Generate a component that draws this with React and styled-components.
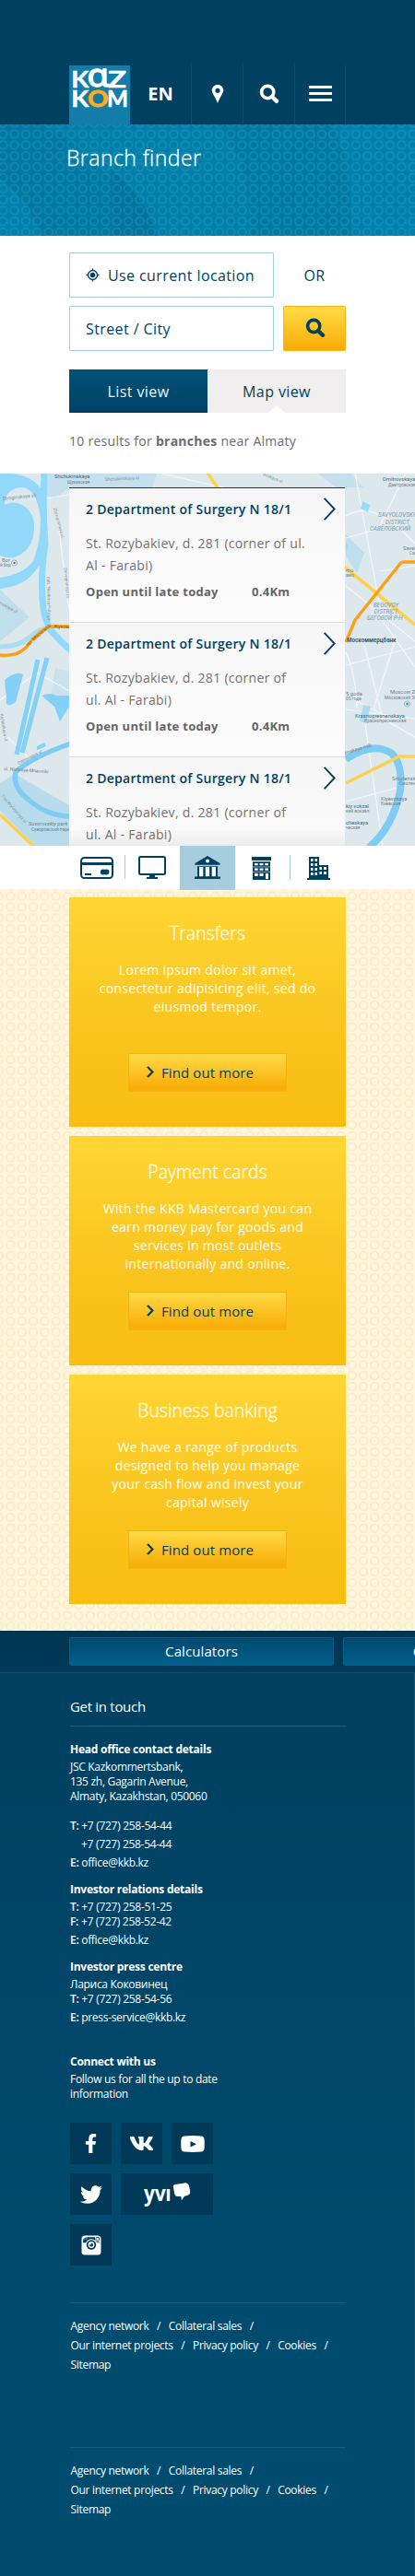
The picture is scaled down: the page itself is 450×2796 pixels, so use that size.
import React from "react";
import styled, { createGlobalStyle, css } from "styled-components";
import { FaFacebookF, FaTwitter, FaVk } from "react-icons/fa";

const navy = "#004060";
const deep = "#003a58";

const GlobalStyle = createGlobalStyle`
  * { box-sizing: border-box; }
  body { margin: 0; font-family: "Open Sans", "Noto Sans", sans-serif; background: #fff; color: ${navy}; }
  h1, h2, h3, p, ul { margin: 0; padding: 0; font-weight: inherit; font-size: inherit; }
  svg { display: block; }
`;

const ring = (color) => css`
  radial-gradient(circle at center, transparent 3.1px, ${color} 3.9px, ${color} 4.7px, transparent 5.6px)
`;

const Page = styled.div`
  width: 450px;
  height: 2796px;
  overflow: hidden;
  display: flex;
  flex-direction: column;
`;

/* ---------- header ---------- */
const Header = styled.header`
  height: 135px;
  flex: none;
  padding-left: 75px;
  display: flex;
  align-items: flex-end;
  background: ${navy};
`;
const Logo = styled.a`
  width: 66px;
  height: 64px;
  background: #137ca8;
`;
const LogoSvg = styled.svg`
  overflow: visible;
`;
const NavCell = styled.a`
  width: ${(p) => p.$width || 56}px;
  height: 66px;
  display: flex;
  align-items: center;
  justify-content: center;
  padding-bottom: 1px;
  border-right: 1px solid #074f71;
  color: #fff;
  font-size: 20px;
  font-weight: 700;
`;

/* ---------- hero ---------- */
const Hero = styled.section`
  position: relative;
  height: 121px;
  flex: none;
  padding: 21px 0 0 72px;
  background: #0079a4;
`;
const HeroArt = styled.svg`
  position: absolute;
  inset: 0;
`;
const HeroDots = styled.div`
  position: absolute;
  inset: 0;
  background: ${ring("rgba(60, 160, 195, 0.36)")};
  background-size: 12.35px 11.84px;
  background-position: 9.5px 4.7px;
`;
const HeroTitle = styled.h1`
  position: relative;
  color: #fff;
  font-size: 23px;
  font-weight: 300;
  line-height: 30px;
  letter-spacing: 0.45px;
  -webkit-text-stroke: 0.3px #fff;
`;

/* ---------- finder ---------- */
const Finder = styled.section`
  height: 258px;
  flex: none;
  padding: 18px 75px 0;
`;
const FinderRow = styled.div`
  display: flex;
  gap: 10px;
  margin-bottom: 9px;
`;
const Field = styled.div`
  width: 222px;
  height: 49px;
  display: flex;
  align-items: center;
  gap: 9px;
  padding-left: 17px;
  border: 1px solid #a3cede;
  border-radius: 1px;
  font-size: 16px;
  letter-spacing: 0.4px;
`;
const Or = styled.div`
  width: 68px;
  display: flex;
  align-items: center;
  justify-content: center;
  font-size: 16px;
  letter-spacing: 0.4px;
`;
const SearchButton = styled.button`
  width: 68px;
  height: 49px;
  padding: 0 0 2px 1px;
  display: flex;
  align-items: center;
  justify-content: center;
  color: ${navy};
  border: 1px solid #fbb313;
  border-radius: 2px;
  background: linear-gradient(#ffdb47, #f9ac06);
`;
const Tabs = styled.div`
  display: flex;
  margin-top: 20px;
`;
const Tab = styled.button`
  position: relative;
  width: 150px;
  height: 47px;
  padding: 0;
  border: 0;
  font: 400 16px "Open Sans", "Noto Sans", sans-serif;
  letter-spacing: 0.4px;
  color: ${(p) => (p.$active ? "#e8f4fa" : navy)};
  background: ${(p) =>
    p.$active ? "linear-gradient(#005278, #00496b 55%, #00436a 92%, #003a58)" : "#f0eeef"};
  ${(p) =>
    !p.$active &&
    css`
      &::after {
        content: "";
        position: absolute;
        left: 66px;
        bottom: 0;
        border: 9px solid transparent;
        border-top: 0;
        border-bottom: 8px solid #fff;
      }
    `}
`;
const ResultCount = styled.p`
  margin-top: 20px;
  font-size: 14px;
  line-height: 22px;
  letter-spacing: 0.27px;
  color: #6b6b6d;
`;

/* ---------- map and results ---------- */
const MapArea = styled.section`
  position: relative;
  height: 404px;
  flex: none;
  padding: 15px 76px 0 75px;
  overflow: hidden;
  background: #dde8ed;
`;
const MapArt = styled.svg`
  position: absolute;
  inset: 0;
`;
const Results = styled.ul`
  position: relative;
  height: 389px;
  overflow: hidden;
  list-style: none;
  border-top: 1px solid ${navy};
  &::after {
    content: "";
    position: absolute;
    inset: auto 0 0 0;
    height: 18px;
    background: linear-gradient(rgba(0, 0, 0, 0), rgba(0, 0, 0, 0.06));
  }
`;
const Result = styled.li`
  height: 146px;
  padding: 10px 10px 0 18px;
  border-bottom: 1px solid #dcdedf;
  background: linear-gradient(#f6f6f6, #fdfdfd);
`;
const ResultTop = styled.div`
  display: flex;
  justify-content: space-between;
  height: 38px;
`;
const ResultName = styled.h2`
  padding-top: 3px;
  font-size: 14px;
  font-weight: 600;
  line-height: 20px;
  letter-spacing: 0.28px;
  white-space: nowrap;
`;
const Address = styled.p`
  font-size: 14px;
  line-height: 24px;
  letter-spacing: 0.3px;
  color: #727274;
`;
const Hours = styled.div`
  display: flex;
  margin-top: 6px;
  font-size: 13px;
  line-height: 20px;
  font-weight: 700;
  letter-spacing: 0.28px;
  color: #646466;
`;
const HoursText = styled.span`
  width: 180px;
`;

/* ---------- category bar ---------- */
const Categories = styled.nav`
  position: relative;
  height: 47px;
  flex: none;
  padding: 0 75px;
  display: flex;
  background: #fff;
`;
const Category = styled.a`
  width: 60px;
  height: ${(p) => (p.$active ? 48 : 47)}px;
  padding: ${(p) => p.$nudge || "0"};
  display: flex;
  align-items: center;
  justify-content: center;
  background: ${(p) => (p.$active ? "#a6cddd" : "transparent")};
  color: ${navy};
`;
const CategoryRule = styled.span`
  width: 1px;
  height: 26px;
  margin: 10px ${(p) => (p.$last ? 0 : -1)}px 0 ${(p) => (p.$last ? -1 : 0)}px;
  background: #a6cddd;
`;

/* ---------- promos ---------- */
const Promos = styled.section`
  height: 805px;
  flex: none;
  padding: 9px 75px 0;
  display: flex;
  flex-direction: column;
  gap: 10px;
  background: ${ring("#fbebc9")} #fff6dc;
  background-size: 12.35px 11.83px;
  background-position: 5.2px 1.8px;
`;
const Promo = styled.article`
  height: 249px;
  flex: none;
  padding-top: 27px;
  display: flex;
  flex-direction: column;
  align-items: center;
  text-align: center;
  color: #fffdf2;
  background: linear-gradient(#fed633, #fac51f 55%, #f8bd10);
`;
const PromoTitle = styled.h2`
  font-size: 19.3px;
  font-weight: 300;
  line-height: 24px;
  letter-spacing: 0.1px;
  -webkit-text-stroke: 0.3px #fffdf2;
`;
const PromoText = styled.p`
  width: 240px;
  height: 80px;
  margin: 18px 0 20px;
  font-size: 14px;
  line-height: 20px;
  letter-spacing: 0.3px;
`;
const MoreButton = styled.a`
  width: 172px;
  height: 42px;
  padding: 0 0 1px 19px;
  display: flex;
  align-items: center;
  gap: 8px;
  border: 1px solid #f8b312;
  background: linear-gradient(#ffda45, #f9af0a 90%);
  color: ${navy};
  font-size: 15px;
  letter-spacing: 0.1px;
`;

/* ---------- footer ---------- */
const ToolBar = styled.nav`
  height: 46px;
  flex: none;
  padding: 7px 0 0 75px;
  display: flex;
  gap: 10px;
  overflow: hidden;
  background: linear-gradient(#003652, ${deep});
  border-bottom: 1px solid #0d4b6c;
`;
const Tool = styled.a`
  width: 287px;
  height: 31px;
  flex: none;
  border: 1px solid #0b5c84;
  border-radius: 2px;
  background: linear-gradient(#004a70, #005f8a);
  color: #fff;
  font-size: 15px;
  line-height: 29px;
  letter-spacing: 0.1px;
  text-align: center;
`;
const Footer = styled.footer`
  flex: 1;
  padding: 26px 74px 0 76px;
  border-right: 1px solid #1b587a;
  background: linear-gradient(${navy}, #004c6f 70%);
  color: #fff;
  font-size: 12px;
  line-height: 16px;
  letter-spacing: -0.3px;
`;
const FooterTitle = styled.h2`
  height: 31px;
  font-size: 15px;
  line-height: 20px;
  letter-spacing: -0.3px;
`;
const Rule = styled.hr`
  height: 1px;
  margin: 0;
  border: 0;
  background: #1d5c7c;
`;
const Block = styled.section`
  padding-top: ${(p) => p.$top}px;
`;
const BlockTitle = styled.h3`
  font-weight: 700;
  margin-bottom: 3px;
  letter-spacing: -0.25px;
`;
const Line = styled.p`
  padding-top: ${(p) => p.$top || 0}px;
  padding-left: ${(p) => p.$indent || 0}px;
  b { font-weight: 600; }
`;
const Socials = styled.div`
  width: 155px;
  margin: 23px 0 40px;
  display: flex;
  flex-wrap: wrap;
  gap: 10px;
`;
const Social = styled.a`
  width: ${(p) => (p.$wide ? 100 : 45)}px;
  height: 45px;
  display: flex;
  align-items: center;
  justify-content: center;
  background: ${deep};
  color: #fff;
`;
const Links = styled.div`
  height: ${(p) => p.$height || 156}px;
  padding: 14px 0 0 0.5px;
`;
const LinkRow = styled.div`
  display: flex;
  gap: 8.6px;
  line-height: 21px;
`;

/* ---------- drawings ---------- */
const SearchIcon = () => (
  <svg width="22" height="22" viewBox="0 0 22 22" fill="none" stroke="currentColor">
    <circle cx="9.2" cy="9" r="6.6" strokeWidth="3.6" />
    <path d="M14 14l5 4.8" strokeWidth="4.4" strokeLinecap="round" />
  </svg>
);
const PinIcon = () => (
  <svg width="14" height="22" viewBox="0 0 14 22" fill="currentColor">
    <path
      fillRule="evenodd"
      d="M7 1C3.500 1 .7 3.700 .7 7.100c0 3 3.200 6.100 6.300 14 3.100-7.900 6.300-11 6.300-14C13.300 3.700 10.500 1 7 1zm0 3.700a2.600 2.600 0 1 1 0 5.200 2.600 2.600 0 0 1 0-5.200z"
    />
  </svg>
);
const MenuIcon = () => (
  <svg width="25" height="17" fill="currentColor">
    <path d="M0 0h25v3H0zM0 7h25v3H0zM0 14h25v3H0z" />
  </svg>
);
const TargetIcon = () => (
  <svg width="15" height="15" viewBox="0 0 15 15" fill="none" stroke="currentColor" strokeWidth="1.300">
    <circle cx="7.500" cy="7.500" r="5" />
    <circle cx="7.500" cy="7.500" r="2.800" fill="currentColor" stroke="none" />
    <path d="M7.500 .5v2.500M7.500 12v2.500M.5 7.500H3M12 7.500h2.500" />
  </svg>
);
const Chevron = () => (
  <svg width="13" height="25" viewBox="0 0 13 25" fill="none" stroke={navy} strokeWidth="1.900">
    <path d="M.7 .8L11.700 12.500 .7 24.200" />
  </svg>
);
const SmallChevron = () => (
  <svg width="8" height="13" viewBox="0 0 8 13" fill="none" stroke="currentColor" strokeWidth="2.200">
    <path d="M1 .9L6.400 6.500 1 12.100" />
  </svg>
);
const LogoArt = () => (
  <LogoSvg width="66" height="64" fill="#fff" stroke="#fff" strokeWidth=".5" fontFamily="Lato, sans-serif" fontWeight="700" fontSize="25.500">
    <text x="2.200" y="23.700" textLength="19" lengthAdjust="spacingAndGlyphs">K</text>
    <text x="19.500" y="23.300" fontFamily="Noto Sans, sans-serif" fontSize="34" fontWeight="400" strokeWidth="1.300" textLength="23.500" lengthAdjust="spacingAndGlyphs">ɑ</text>
    <text x="42" y="23.700" textLength="20" lengthAdjust="spacingAndGlyphs">Z</text>
    <text x="2.200" y="44.500" textLength="19" lengthAdjust="spacingAndGlyphs">K</text>
    <text x="20" y="44.500" textLength="22.500" lengthAdjust="spacingAndGlyphs" fill="#fbb016" stroke="#fbb016" strokeWidth=".8">O</text>
    <text x="41" y="44.500" textLength="23" lengthAdjust="spacingAndGlyphs">M</text>
  </LogoSvg>
);
const CardIcon = () => (
  <svg width="36" height="24" viewBox="0 0 36 24" fill="none" stroke="currentColor" strokeWidth="2">
    <rect x="1" y="1" width="34" height="22" rx="3.500" />
    <path d="M1 7.500h34" strokeWidth="3" />
    <path d="M5 19h7" />
    <g fill="currentColor" stroke="none">
      <circle cx="24.800" cy="16.500" r="3" />
      <circle cx="28.400" cy="16.500" r="3" />
    </g>
  </svg>
);
const MonitorIcon = () => (
  <svg width="30" height="25" viewBox="0 0 30 25" fill="currentColor">
    <rect x="1" y="1" width="28" height="19" rx="1.500" fill="none" stroke="currentColor" strokeWidth="2" />
    <path d="M12 20h6v3h3v2H9v-2h3z" />
  </svg>
);
const BankIcon = () => (
  <svg width="28" height="25" viewBox="0 0 28 25">
    <path fill="currentColor" d="M14 0l13.500 8v1.700H.5V8zM3 11.300h22v11.200H3zM0 22.500h28V25H0z" />
    <circle cx="14" cy="5.500" r="2" fill="#fff" />
    <path fill="#fff" d="M5 12h4.300v10.200H5zM11.800 12h4.300v10.200h-4.300zM18.700 12H23v10.200h-4.300z" />
  </svg>
);
const OfficeIcon = () => (
  <svg width="21" height="25" viewBox="0 0 21 25">
    <path fill="currentColor" d="M0 0h21v4H0zM1 5.200h19v19.800H1z" />
    <path
      fill="#fff"
      d="M3 7h3.700v2.300H3zM8.500 7h4v2.300h-4zM14.300 7H18v2.300h-3.700zM3 12.500h3.700v2.300H3zM8.500 12.500h4v2.300h-4zM14.300 12.500H18v2.300h-3.700zM3 18h3.700v3H3zM8.500 18h4v3h-4zM15 18h3v6h-3zM1 10.700h19v.6H1zM1 16.200h19v.6H1z"
    />
  </svg>
);
const TowersIcon = () => (
  <svg width="25" height="25" viewBox="0 0 25 25">
    <path fill="currentColor" d="M2 0h11v9h10v14h2v2H0v-2h2z" />
    <path
      fill="#fff"
      d="M4 2h2.500v3H4zM8.500 2H11v3H8.500zM4 7h2.500v3H4zM8.500 7H11v3H8.500zM4 12h2.500v3H4zM8.500 12H11v3H8.500zM4 17h2.500v3H4zM8.500 17H11v3H8.500zM13.500 11h2.500v3h-2.500zM18 11h3v3h-3zM13.500 16h2.500v3h-2.500zM18 16h3v3h-3z"
    />
  </svg>
);
const YoutubeIcon = () => (
  <svg width="26" height="18" viewBox="0 0 26 18">
    <path fill="currentColor" d="M4 .5Q13-.4 22 .5q3.300.2 3.500 3.500.5 5 0 10-.2 3.300-3.500 3.500-9 .9-18 0Q.7 17.300 .5 14 0 9 .5 4 .7 .7 4 .5z" />
    <path fill={deep} d="M10.500 6l6.500 3.200-6.500 3.300z" />
  </svg>
);
const YviIcon = () => (
  <svg width="54" height="28" viewBox="0 0 54 28" fill="currentColor">
    <text x="2" y="20.500" fontSize="24" fontWeight="700" textLength="29.500" lengthAdjust="spacingAndGlyphs">yvı</text>
    <path d="M34 6.500Q33 3.800 36 3l10-1.600q3.500-.7 4.800 2.500l1.200 5q1 4.500-2 5.500-1.500 1-4 1.300l-3 4.500-.8-4.300-4.500 0q-2-.4-2.500-3z" />
  </svg>
);
const CameraIcon = () => (
  <svg width="22" height="22" viewBox="0 0 22 22">
    <rect x=".5" y=".5" width="21" height="21" rx="3.500" fill="currentColor" />
    <path d="M2 7.500q0-5 3.500-5.200H15v3.500q0 1.700 2 1.700h3v.7H2z" fill={deep} />
    <path d="M4 2v3M5.800 2v3" stroke="currentColor" strokeWidth=".5" />
    <rect x="16" y="2.600" width="3.600" height="3.600" rx=".6" fill="none" stroke={deep} strokeWidth=".9" />
    <circle cx="11" cy="10.500" r="6.200" fill="currentColor" />
    <circle cx="11" cy="10.500" r="5.200" fill={deep} />
    <circle cx="11" cy="10.500" r="3.400" fill="currentColor" />
    <circle cx="11" cy="10.500" r="2" fill={deep} />
    <circle cx="9.800" cy="9.500" r="1.100" fill="currentColor" />
  </svg>
);

const mapLabels = [
  { x: 59, y: 519, t: "Shchukinskaya", c: "#4a6272" },
  { x: 73, y: 525, t: "Щукинская", s: 4.6 },
  { x: 114, y: 522, t: "Shchukinskaya ul.", s: 4.8, r: -3, c: "#8a949a" },
  { x: 285, y: 516, t: "evskaya ul.", s: 4.8, r: 22, c: "#8a949a" },
  { x: 415, y: 522, t: "Dmitrovskaya", c: "#4a6a80" },
  { x: 421, y: 528, t: "Дмитровская", s: 4.6 },
  { x: 410, y: 561, t: "SAVYOLOVSKY", s: 6.3, i: 1, c: "#8299a8" },
  { x: 418, y: 568.500, t: "DISTRICT", s: 6.3, i: 1, c: "#8299a8" },
  { x: 401, y: 575.500, t: "САВЁЛОВСКИЙ", s: 6.3, i: 1, c: "#8299a8" },
  { x: 437, y: 597, t: "Savelovskaya" },
  { x: 444, y: 602, t: "Савёловская", s: 4.6 },
  { x: 405, y: 658.500, t: "BEGOVOY", s: 6.3, i: 1, c: "#8299a8" },
  { x: 405.500, y: 666, t: "DISTRICT", s: 6.3, i: 1, c: "#8299a8" },
  { x: 398, y: 673, t: "БЕГОВОЙ Р-Н", s: 6.3, i: 1, c: "#8299a8" },
  { x: 376, y: 697, t: "Москоммерцбанк", s: 6.3, c: "#1e5470", w: 600 },
  { x: 3, y: 543, t: "Stroginskoye sh.", s: 5.2, r: -6, c: "#7b8c96" },
  { x: 58, y: 552, t: "Zhivopisnaya ul.", s: 4.8, r: 75, c: "#8a949a" },
  { x: 69, y: 616, t: "Zhivopisnaya ul.", s: 4.8, r: 84, c: "#8a949a" },
  { x: 51, y: 626, t: "nab. Novikova-Priboya", s: 4.8, r: 89, c: "#8a949a" },
  { x: 2, y: 610, t: "Bor" },
  { x: 0, y: 615, t: "й бор", s: 4.6 },
  { x: -2, y: 655, t: "enskaya ul.", s: 4.8, r: 28, c: "#8a949a" },
  { x: 30, y: 702, t: "пр. Маршала", s: 5.5, r: -42, c: "#8b5a10" },
  { x: 58, y: 681.500, t: "Жуков", s: 5.5, r: 2, c: "#8b5a10" },
  { x: 0, y: 775, t: "Krylatskaya ul.", s: 4.8, r: 80, c: "#8a949a" },
  { x: 20, y: 830, t: "Ostrovnaya ul.", s: 4.8, r: -27, c: "#7b8c96" },
  { x: 4, y: 836, t: "ul. Nizhniye Mnevniki", s: 5.2, r: 4 },
  { x: 1, y: 864, t: "1-ya Krylatskaya ul.", s: 4.8, r: 49, c: "#8a949a" },
  { x: 31, y: 896, t: "Suvorovskiy park", s: 5.8, i: 1 },
  { x: 34, y: 902, t: "Суворовский парк", s: 4.8 },
  { x: 375, y: 755, t: "5 goda" },
  { x: 375, y: 760, t: "05 года", s: 4.8 },
  { x: 423, y: 753, t: "Moscow Zoo" },
  { x: 417, y: 758.500, t: "Московский Зоопарк", s: 4.8 },
  { x: 385, y: 779, t: "Krasnopresnenskaya", c: "#3d6884" },
  { x: 395, y: 784, t: "Краснопресненская", s: 4.8 },
  { x: 374, y: 819, t: "enskaya nab.", s: 5.5, r: -17 },
  { x: 425, y: 847, t: "Smolenskaya" },
  { x: 433, y: 852, t: "Смоленская", s: 4.8 },
  { x: 413, y: 869, t: "Kiyevskaya" },
  { x: 413, y: 874, t: "Киевская", s: 4.8 },
  { x: 375, y: 877, t: "kiy vokzal", c: "#3d6884" },
  { x: 375, y: 882, t: "кий вокзал", s: 4.8 },
  { x: 375, y: 894.500, t: "cheskaya", c: "#3d6884" },
  { x: 375, y: 900, t: "ческая", s: 4.8 },
  { x: 375, y: 621, t: "mo" },
  { x: 375, y: 626, t: "амо", s: 4.8 },
];

const CityMap = () => (
  <MapArt width="450" height="404" viewBox="0 514 450 404" fill="none">
    <g fill="#b9dcec">
      <path d="M50 514h120l-5 15H75l-15 12-12-4zM345 514h35l14 15h-30z" opacity=".7" />
      <path d="M375 580l20 20-8 22-12-18zM0 640l32 30-32 26z" opacity=".8" />
      <path d="M60 725l15 4v40l-20-14z" opacity=".5" />
      <path d="M0 850l16-10 59 34v44H38L0 880z" />
    </g>
    <g stroke="#f3f7f8" strokeWidth="1.200">
      <path d="M50 541l25-4M375 560q30-20 75 30M375 636l75 60M385 514l30 160 35 50M440 514l-30 60-35 10M375 708q10 20 12 60M375 722l75-20M395 700l20 80 35 20M375 770l75 10M0 760l40-30 35 20M375 755l40 20M395 780l20 138M375 870l75-20M430 690l-25 80M175 514l75 17M62 560l13 100M8 800l30 30M412 620l38-6" />
    </g>
    <g fill="#92d8fa">
      <path d="M0 514h12q22 2 32 16 7 12 5 34l-1 44-12 14Q26 636 0 639v-12q26-4 36-18 8-20 8-46Q40 528 22 529 10 530 6 540l-2 14-4-2z" />
      <path d="M0 550q14-8 24-2 14 8 13 26-1 24-22 31-8 1-15-2z" />
    </g>
    <path d="M48 514q-2 40 1 76-6 40-2 70 2 14 8 24 12 14 22 22" stroke="#91d9fb" strokeWidth="7" />
    <path d="M0 702q20 0 32-10 12-12 24-10" stroke="#aadcf2" strokeWidth="5" />
    <path d="M41 716L18 819M51 714L24 817" stroke="#83d0f8" strokeWidth="5" />
    <path d="M5 738q12-10 20-6l-8 30q-12 8-10-4zM45 755q10-4 16 0l14 0v12l-10 16-6-16zM40 810l8-4 2 4-10 4z" fill="#83d0f8" />
    <path d="M77 807Q34 822 17 838q-4 16 14 30 20 18 46 18" stroke="#7fcbf3" strokeWidth="5.500" />
    <path d="M393 544l8 4-2 8-8-4zM375 588l3 4-3 8z" fill="#9bdcf8" />
    <path d="M375 824q30-20 50-6 12 12 9 40-8 40-34 62" stroke="#80cbf3" strokeWidth="8" />
    <path d="M394 765l8 2-5 18-7-2z" fill="#a8dcf3" />
    <path d="M0 711q18 2 28-8Q42 684 55 680h22" stroke="#ff9d14" strokeWidth="3.300" />
    <path d="M0 884l38 36M224 512l13 19M373 615l77 63M375 850l58-29h17" stroke="#ffd04b" strokeWidth="3.600" />
    <path d="M375 697l10-24 48-60q2-3 5-3h14" stroke="#ff9d14" strokeWidth="3.400" />
    <g fill="#6f808b">
      {mapLabels.map((l, n) => (
        <text
          key={n}
          x={l.x}
          y={l.y}
          fontSize={l.s || 5.8}
          fill={l.c}
          fontWeight={l.w}
          fontFamily="Roboto, sans-serif"
          fontStyle={l.i ? "italic" : "normal"}
          transform={l.r ? `rotate(${l.r} ${l.x} ${l.y})` : undefined}
        >
          {l.t}
        </text>
      ))}
    </g>
    <g>
      <circle cx="15.500" cy="611" r="3" fill="#fff" stroke="#7d98a8" strokeWidth=".8" />
      <circle cx="15.500" cy="611" r="1.200" fill="#3b6e90" />
      <circle cx="441.500" cy="764" r="3" fill="#fff" stroke="#6cb2dd" strokeWidth="1" />
      <circle cx="441.500" cy="764" r="1.200" fill="#3b6e90" />
    </g>
  </MapArt>
);

const HeroWaves = () => (
  <HeroArt width="450" height="121" viewBox="0 0 450 121">
    <path d="M45 0h190q35 30 38 121H160Q120 40 45 0z" fill="#007faa" />
    <path d="M235 0q35 30 38 121h108Q382 40 360 0z" fill="#007aa5" />
    <path d="M0 60q30 20 45 61H0zM360 0h90v121h-69Q382 40 360 0z" fill="#0081ad" />
    <path d="M120 50q35 25 50 71h-45z" fill="#00749e" />
  </HeroArt>
);

const results = [
  ["St. Rozybakiev, d. 281 (corner of ul.", "Al - Farabi)"],
  ["St. Rozybakiev, d. 281 (corner of", "ul. Al - Farabi)"],
  ["St. Rozybakiev, d. 281 (corner of", "ul. Al - Farabi)"],
];
const promos = [
  ["Transfers", ["Lorem ipsum dolor sit amet,", "consectetur adipisicing elit, sed do", "eiusmod tempor."]],
  ["Payment cards", ["With the KKB Mastercard you can", "earn money pay for goods and", "services in most outlets", "internationally and online."]],
  ["Business banking", ["We have a range of products", "designed to help you manage", "your cash flow and invest your", "capital wisely"]],
];
const linkRows = [
  ["Agency network", "Collateral sales"],
  ["Our internet projects", "Privacy policy", "Cookies"],
  ["Sitemap"],
];

const FooterLinks = ({ height }) => (
  <>
    <Rule />
    <Links $height={height}>
      {linkRows.map((row, n) => (
        <LinkRow key={n}>
          {row.map((link) => (
            <React.Fragment key={link}>
              <a>{link}</a>
              {n < 2 && <span>/</span>}
            </React.Fragment>
          ))}
        </LinkRow>
      ))}
    </Links>
  </>
);

export default function App() {
  return (
    <Page>
      <GlobalStyle />
      <Header>
        <Logo><LogoArt /></Logo>
        <NavCell $width={67}>EN</NavCell>
        <NavCell><PinIcon /></NavCell>
        <NavCell><SearchIcon /></NavCell>
        <NavCell $width={55}><MenuIcon /></NavCell>
      </Header>

      <Hero>
        <HeroWaves />
        <HeroDots />
        <HeroTitle>Branch finder</HeroTitle>
      </Hero>

      <Finder>
        <FinderRow>
          <Field><TargetIcon />Use current location</Field>
          <Or>OR</Or>
        </FinderRow>
        <FinderRow>
          <Field>Street / City</Field>
          <SearchButton aria-label="Search"><SearchIcon /></SearchButton>
        </FinderRow>
        <Tabs>
          <Tab $active>List view</Tab>
          <Tab>Map view</Tab>
        </Tabs>
        <ResultCount>10 results for <b>branches</b> near Almaty</ResultCount>
      </Finder>

      <MapArea>
        <CityMap />
        <Results>
          {results.map(([first, second], n) => (
            <Result key={n}>
              <ResultTop>
                <ResultName>2 Department of Surgery N 18/1</ResultName>
                <Chevron />
              </ResultTop>
              <Address>{first}<br />{second}</Address>
              <Hours><HoursText>Open until late today</HoursText>0.4Km</Hours>
            </Result>
          ))}
        </Results>
      </MapArea>

      <Categories>
        <Category><CardIcon /></Category>
        <CategoryRule />
        <Category><MonitorIcon /></Category>
        <Category $active $nudge="0 0 2px"><BankIcon /></Category>
        <Category $nudge="2px 3px 0 0"><OfficeIcon /></Category>
        <CategoryRule $last />
        <Category $nudge="2px 0 0 1px"><TowersIcon /></Category>
      </Categories>

      <Promos>
        {promos.map(([title, lines]) => (
          <Promo key={title}>
            <PromoTitle>{title}</PromoTitle>
            <PromoText>
              {lines.map((line) => (
                <React.Fragment key={line}>{line}<br /></React.Fragment>
              ))}
            </PromoText>
            <MoreButton><SmallChevron />Find out more</MoreButton>
          </Promo>
        ))}
      </Promos>

      <ToolBar>
        <Tool>Calculators</Tool>
        <Tool>Currency exchange</Tool>
      </ToolBar>
      <Footer>
        <FooterTitle>Get in touch</FooterTitle>
        <Rule />
        <Block $top={17}>
          <BlockTitle>Head office contact details</BlockTitle>
          <Line>JSC Kazkommertsbank,</Line>
          <Line>135 zh, Gagarin Avenue,</Line>
          <Line>Almaty, Kazakhstan, 050060</Line>
          <Line $top={16}><b>T:</b> +7 (727) 258-54-44</Line>
          <Line $top={4} $indent={12}>+7 (727) 258-54-44</Line>
          <Line $top={4}><b>E:</b> office@kkb.kz</Line>
        </Block>
        <Block $top={13}>
          <BlockTitle>Investor relations details</BlockTitle>
          <Line><b>T:</b> +7 (727) 258-51-25</Line>
          <Line><b>F:</b> +7 (727) 258-52-42</Line>
          <Line $top={4}><b>E:</b> office@kkb.kz</Line>
        </Block>
        <Block $top={13}>
          <BlockTitle>Investor press centre</BlockTitle>
          <Line>Лариса Коковинец</Line>
          <Line><b>T:</b> +7 (727) 258-54-56</Line>
          <Line $top={4}><b>E:</b> press-service@kkb.kz</Line>
        </Block>
        <Block $top={32}>
          <BlockTitle>Connect with us</BlockTitle>
          <Line>Follow us for all the up to date</Line>
          <Line>information</Line>
        </Block>
        <Socials>
          <Social><FaFacebookF size={21} /></Social>
          <Social><FaVk size={27} /></Social>
          <Social><YoutubeIcon /></Social>
          <Social><FaTwitter size={24} /></Social>
          <Social $wide><YviIcon /></Social>
          <Social><CameraIcon /></Social>
        </Socials>
        <FooterLinks />
        <FooterLinks height={140} />
      </Footer>
    </Page>
  );
}
